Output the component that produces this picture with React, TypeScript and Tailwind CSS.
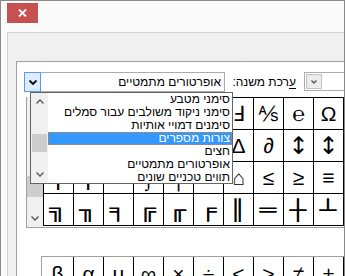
import React from 'react';

const HEB = "font-['Liberation_Sans','DejaVu_Sans',sans-serif]";

const boxChars = '─│┌┐└┘├┤┬┴┼═║╒╓╔╕╖╗';

// main grid, left to right as it shows in the rtl dialog
const grid = [
  ['⅛', '⅜', '⅝', '⅞', '№', '™', 'Ⅎ', '⅍', '℮', 'Ω'],
  ['√', '∙', '∕', '−', '∑', '∏', 'Δ', '∂', '↕', '↕'],
  ['┌', '│', '─', '⌡', '⌠', '⌐', '⌂', '≤', '≥', '≡'],
  ['╗', '╖', '╕', '╔', '╓', '╒', '║', '═', '┼', '┴'],
];

const recent = ['β', 'α', 'µ', '∞', '×', '÷', '<', '>', '≠', '±'];

const subsets = [
  'סימני מטבע',
  'סימני ניקוד משולבים עבור סמלים',
  'סימנים דמויי אותיות',
  'צורות מספרים',
  'חצים',
  'אופרטורים מתמטיים',
  'תווים טכניים שונים',
];

function Chevron({ up = false, color = '#606060', width = 1.5 }: { up?: boolean; color?: string; width?: number }) {
  return (
    <svg width="8" height="5" viewBox="0 0 8 5">
      <polyline
        points={up ? '0.5,4.5 4,1 7.5,4.5' : '0.5,0.5 4,4 7.5,0.5'}
        fill="none"
        stroke={color}
        strokeWidth={width}
      />
    </svg>
  );
}

function Glyph({ ch }: { ch: string }) {
  const isBox = boxChars.includes(ch);
  const isArrow = ch === '↕';
  return (
    <div className="w-[30px] h-[32px] border-r border-b border-black flex items-center justify-center leading-none text-black">
      {isBox ? (
        <span className="font-['DejaVu_Sans'] font-bold text-[20px] scale-x-140 inline-block">{ch}</span>
      ) : isArrow ? (
        <span className="font-['DejaVu_Sans'] text-[24px]">{ch}</span>
      ) : (
        <span className="font-['Liberation_Sans','DejaVu_Sans',sans-serif] text-[21px]">{ch}</span>
      )}
    </div>
  );
}

function SubsetList() {
  return (
    <div className="absolute left-[13px] top-[30px] w-[203px] h-[92px] border border-[#646464] bg-white flex">
      {/* scrollbar */}
      <div className="w-[17px] h-full bg-[#f0f0f0] flex flex-col">
        <div className="h-[17px] flex items-center justify-center">
          <Chevron up />
        </div>
        <div className="h-[24px]" />
        <div className="h-[18px] mx-[1px] bg-[#cdcdcd]" />
        <div className="flex-1" />
        <div className="h-[17px] flex items-center justify-center">
          <Chevron />
        </div>
      </div>
      <div className="flex-1 overflow-hidden">
        {subsets.map((s, i) => (
          <div
            key={s}
            dir="rtl"
            className={`h-[13px] leading-[13px] text-[12px] pr-[2px] whitespace-nowrap ${HEB} ${
              i === 3
                ? 'bg-[#3399ff] text-white outline outline-1 outline-dotted outline-[#d9822b] -outline-offset-1'
                : 'text-black'
            }`}
          >
            {s}
          </div>
        ))}
      </div>
    </div>
  );
}

export default function App() {
  return (
    <div className="w-[345px] h-[276px] overflow-hidden flex flex-col bg-[#fafafa] border-l border-t border-r border-[#8a8a8a]">
      {/* title bar */}
      <div className="h-[31px] shrink-0 pl-[6px] pt-[2px]">
        <div className="w-[31px] h-[20px] bg-[#c75050] flex items-center justify-center">
          <svg width="9" height="8" viewBox="0 0 9 8">
            <path d="M1 0.5 L8 7.5 M8 0.5 L1 7.5" stroke="#fff" strokeWidth="1.8" />
          </svg>
        </div>
      </div>

      {/* client area */}
      <div className="flex-1 ml-[6px] border-l border-t border-[#d4d4d4] bg-[#f0f0f0] pl-[8px] pt-[28px]">
        <div className="relative h-full bg-white border-l border-t border-[#a0a0a0]">
          {/* subset / font row */}
          <div className="flex items-start pt-[10px] pl-[7px]">
            <div className="w-[201px] h-[20px] flex">
              <div className="w-[17px] h-full border border-[#569de5] bg-[#dcecfc] flex items-center justify-center">
                <Chevron color="#000" width={1.8} />
              </div>
              <div
                dir="rtl"
                className={`flex-1 h-full border-y border-r border-[#acacac] text-[12px] leading-[18px] pr-[3px] text-black ${HEB}`}
              >
                אופרטורים מתמטיים
              </div>
            </div>
            <div dir="rtl" className={`ml-[3px] w-[68px] h-[20px] leading-[20px] text-[12px] text-black whitespace-nowrap ${HEB}`}>
              <span className="underline underline-offset-2">ע</span>רכת משנה:
            </div>
            <div className="ml-[8px] flex-1 h-[19px] border-y border-l border-[#acacac] pl-[1px] pt-[1px]">
              <div className="w-[16px] h-[15px] border border-[#c4c4c4] bg-[#ececec] flex items-center justify-center">
                <svg width="6" height="4" viewBox="0 0 6 4">
                  <polyline points="0.5,0.5 3,3 5.5,0.5" fill="none" stroke="#555" strokeWidth="1.3" />
                </svg>
              </div>
            </div>
          </div>

          {/* symbol grid */}
          <div className="ml-[9px] mt-[5px] w-[318px] flex border-l border-b border-[#a0a0a0]">
            <div className="w-[16px] bg-[#f0f0f0] flex flex-col">
              <div className="h-[17px] flex items-center justify-center">
                <Chevron up />
              </div>
              <div className="h-[62px]" />
              <div className="h-[21px] bg-[#cdcdcd]" />
              <div className="flex-1" />
              <div className="h-[17px] flex items-center justify-center">
                <Chevron />
              </div>
            </div>
            <div className="pb-[1px]">
              <div className="border-l border-t border-black">
                {grid.map((row, r) => (
                  <div key={r} className="flex">
                    {row.map((ch, c) => (
                      <Glyph key={c} ch={ch} />
                    ))}
                  </div>
                ))}
              </div>
            </div>
          </div>

          {/* recently used */}
          <div className="ml-[24px] mt-[28px] flex border-l border-t border-[#a0a0a0]">
            {recent.map((ch, i) => (
              <div
                key={i}
                className={`h-[32px] border-r border-black flex items-center justify-center text-[21px] leading-none text-black font-['Liberation_Sans','DejaVu_Sans',sans-serif] ${
                  i === 0 ? 'w-[32px]' : 'w-[30px]'
                }`}
              >
                {ch}
              </div>
            ))}
          </div>

          <SubsetList />
        </div>
      </div>
    </div>
  );
}
